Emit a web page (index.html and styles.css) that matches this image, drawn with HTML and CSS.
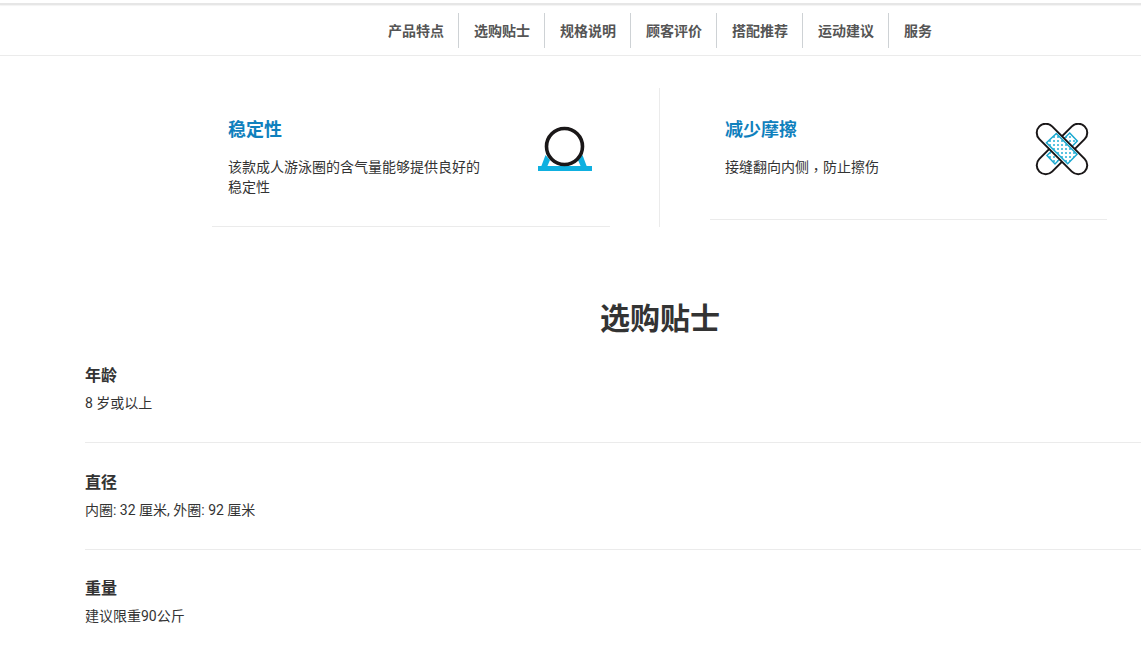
FILE: index.html
```html
<!DOCTYPE html>
<html lang="zh-CN">
<head>
  <meta charset="UTF-8">
  <meta name="viewport" content="width=device-width, initial-scale=1.0">
  <title>选购贴士</title>
  <link rel="stylesheet" href="styles.css">
</head>
<body>
  <div class="top-line"></div>
  <nav>
    <ul class="tabs">
      <li>产品特点</li>
      <li>选购贴士</li>
      <li>规格说明</li>
      <li>顾客评价</li>
      <li>搭配推荐</li>
      <li>运动建议</li>
      <li>服务</li>
    </ul>
  </nav>

  <main>
    <!-- Product benefits -->
    <section class="benefits">
      <div class="benefit">
        <div class="benefit-text">
          <h3>稳定性</h3>
          <p>该款成人游泳圈的含气量能够提供良好的稳定性</p>
        </div>
        <svg class="icon" width="60" height="60" viewBox="0 0 60 60">
          <path d="M10.5 32L15 37L12 44H6ZM47.5 32L43 37L46 44H52Z" fill="#0fb0e0"/>
          <path d="M3 43H57V48H3Z" fill="#0fb0e0"/>
          <circle cx="29.5" cy="23.5" r="18" fill="#fff" stroke="#1a1718" stroke-width="3.6"/>
        </svg>
      </div>
      <div class="divider"></div>
      <div class="benefit short">
        <div class="benefit-text">
          <h3>减少摩擦</h3>
          <p>接缝翻向内侧<span class="comma" lang="zh-TW">，</span>防止擦伤</p>
        </div>
        <svg class="icon" width="60" height="60" viewBox="0 0 60 60">
          <defs>
            <pattern id="dots" width="4" height="4" patternUnits="userSpaceOnUse">
              <rect width="4" height="4" fill="#fff"/>
              <rect x="1" y="1" width="2" height="2" fill="#5cc4e0"/>
            </pattern>
          </defs>
          <g transform="translate(30 26) rotate(-45)">
            <rect x="-32" y="-9" width="64" height="18" rx="9" fill="#fff" stroke="#1a1718" stroke-width="2"/>
          </g>
          <path d="M37.7 10L45.3 18L23 41L15 32.5Z" fill="url(#dots)" stroke="#1ba9d0" stroke-width="1.5"/>
          <g transform="translate(30 26) rotate(45)">
            <rect x="-32" y="-9" width="64" height="18" rx="9" fill="#fff" stroke="#1a1718" stroke-width="2"/>
          </g>
          <path d="M24.3 10.5L45 31.3L35.7 40.7L14.5 19.7Z" fill="url(#dots)" stroke="#1ba9d0" stroke-width="1.5"/>
        </svg>
      </div>
    </section>

    <!-- Buying tips -->
    <section class="tips">
      <h2>选购贴士</h2>
      <div class="tip">
        <h4>年龄</h4>
        <p>8 岁或以上</p>
      </div>
      <div class="tip">
        <h4>直径</h4>
        <p>内圈: 32 厘米, 外圈: 92 厘米</p>
      </div>
      <div class="tip">
        <h4>重量</h4>
        <p>建议限重90公斤</p>
      </div>
    </section>
  </main>
</body>
</html>
```
FILE: styles.css
```css
* {
  box-sizing: border-box;
}

body {
  margin: 0;
  background: #fff;
  color: #333;
  font-family: Roboto, "Noto Sans CJK SC", sans-serif;
  font-size: 14px;
  line-height: 20px;
}

h2, h3, h4, p, ul {
  margin: 0;
  padding: 0;
}

main {
  display: flow-root;
}

.top-line {
  height: 2px;
  margin-top: 3px;
  background: #e6e6e6;
  box-shadow: 0 1px 1px #f3f3f3;
}

nav {
  height: 51px;
  padding-top: 8px;
  border-bottom: 1px solid #ebebeb;
}

.tabs {
  display: flex;
  margin-left: 373px;
  list-style: none;
}

.tabs li {
  height: 35px;
  padding: 0 14px 0 15px;
  border-right: 1px solid #ced2d5;
  color: #555;
  font-weight: bold;
  line-height: 37px;
}

.tabs li:last-child {
  border-right: none;
}

.benefits {
  display: flex;
  align-items: flex-start;
  margin: 32px 0 0 212px;
}

.benefit {
  display: flex;
  justify-content: space-between;
  width: 398px;
  height: 139px;
  padding: 30px 15px 0 16px;
  border-bottom: 1px solid #ebebeb;
}

.benefit.short {
  width: 397px;
  height: 132px;
  padding-left: 15px;
}

.benefit-text {
  width: 262px;
}

.benefit h3 {
  margin-bottom: 15px;
  color: #0f80bd;
  font-size: 18px;
  line-height: 24px;
}

.comma {
  font-family: "Noto Sans CJK TC", sans-serif;
  line-height: 1;
  vertical-align: -3px;
}

.icon {
  flex: none;
  margin: 5px 0 0;
}

.divider {
  width: 1px;
  height: 139px;
  margin: 0 50px 0 49px;
  background: #ebebeb;
}

.tips {
  margin: 72px 0 0 85px;
}

.tips h2 {
  padding-left: 94px;
  font-size: 30px;
  line-height: 40px;
  text-align: center;
}

.tip {
  height: 107px;
  padding-top: 30px;
  border-bottom: 1px solid #ebebeb;
}

.tip:nth-child(2) {
  height: 104px;
  padding-top: 27px;
}

.tip:last-child {
  height: 98px;
  padding-top: 29px;
  border-bottom: none;
}

.tip h4 {
  margin-bottom: 7px;
  font-size: 16px;
  line-height: 20px;
}
```
